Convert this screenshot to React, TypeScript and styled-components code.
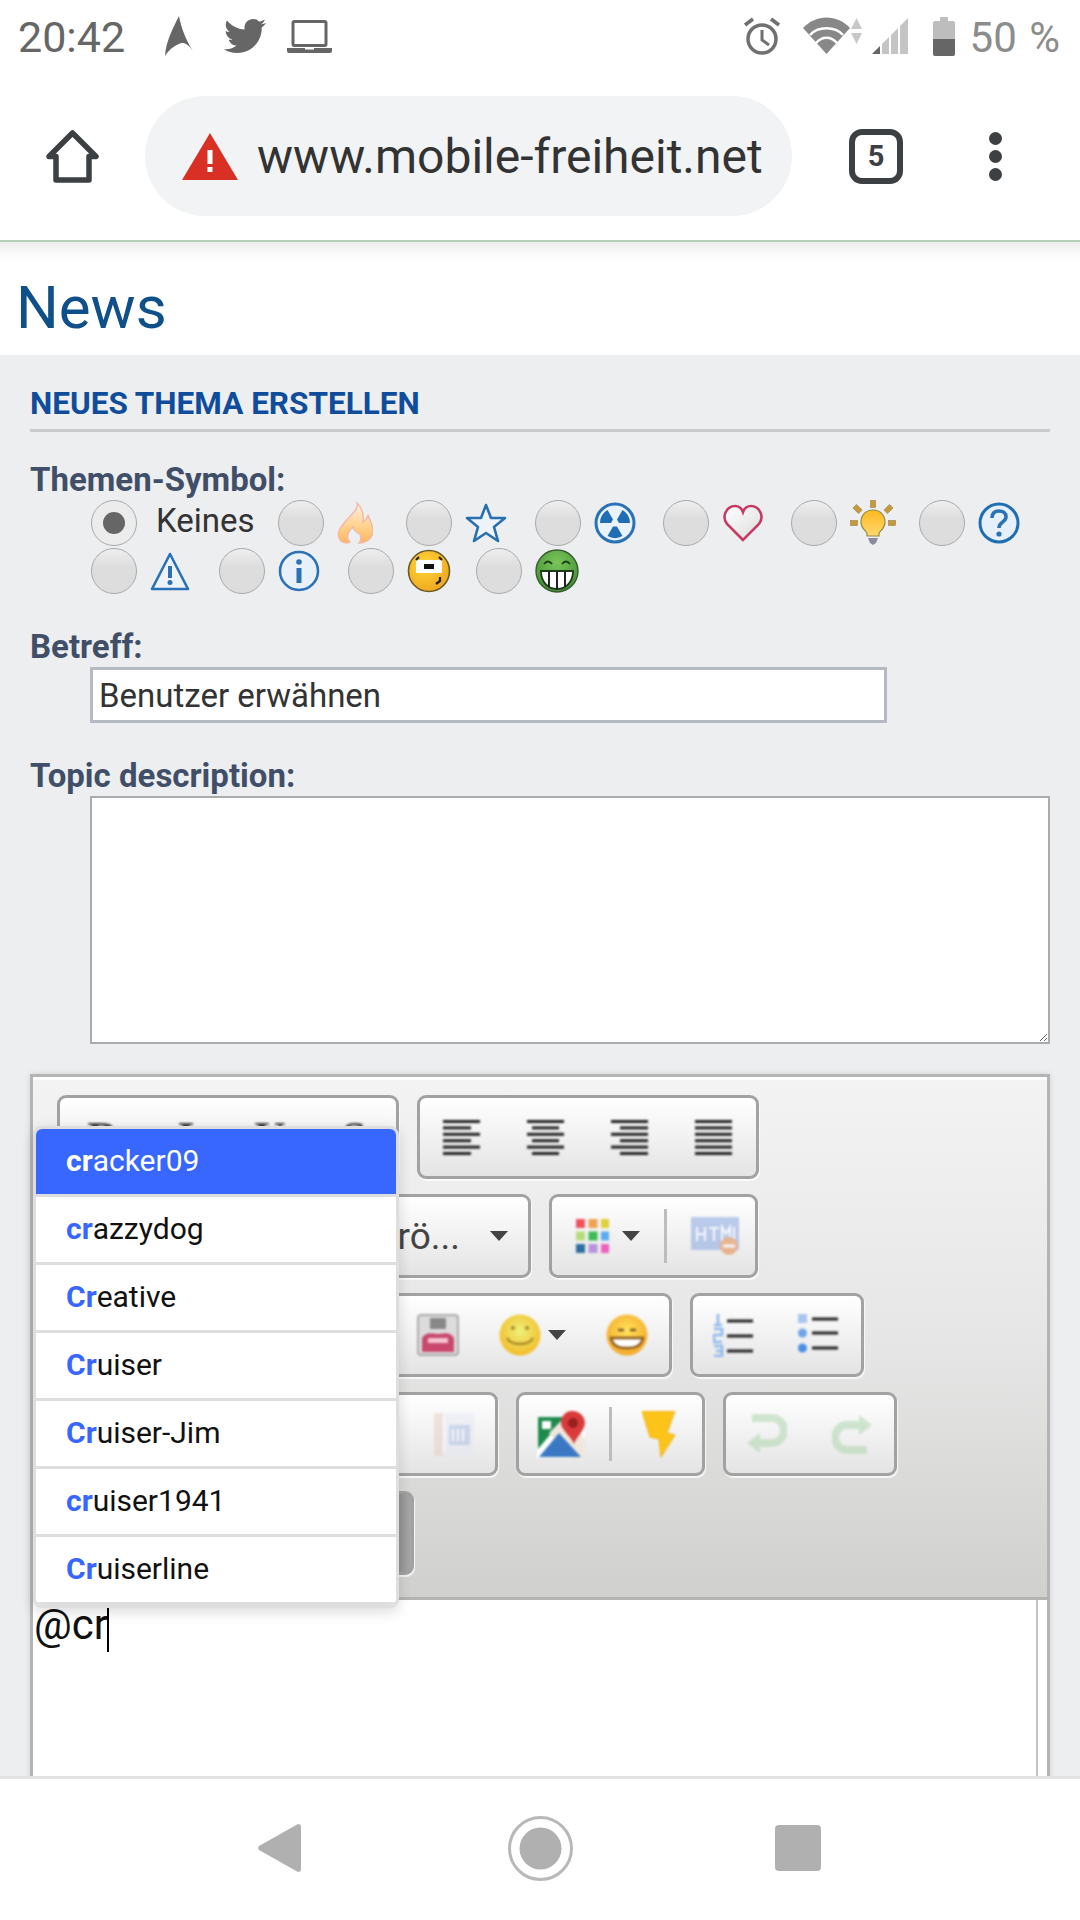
import React from "react";
import styled, { createGlobalStyle } from "styled-components";
import { FaTwitter } from "react-icons/fa";

const GlobalStyle = createGlobalStyle`
  html, body {
    margin: 0;
    padding: 0;
    background: #fff;
    font-family: Roboto, "Liberation Sans", sans-serif;
  }
`;

const Screen = styled.div`
  width: 1080px;
  height: 1920px;
  display: flex;
  flex-direction: column;
  overflow: hidden;
  background: #fff;
`;

/* status bar */
const StatusBar = styled.div`
  height: 72px;
  flex: none;
  display: flex;
  align-items: center;
  padding: 0 20px 0 18px;
  color: #666;
`;

const Clock = styled.div`
  font-size: 43px;
  line-height: 72px;
  padding-top: 2px;
`;

const Slot = styled.div<{ $ml: number }>`
  display: flex;
  align-items: center;
  margin-left: ${(p) => p.$ml}px;
`;

const Spacer = styled.div`
  flex: 1;
`;

const Percent = styled.div`
  font-size: 42px;
  color: #8c8c8c;
  margin-left: 15px;
  padding-top: 2px;
  word-spacing: 2px;
`;

/* browser bar */
const BrowserBar = styled.div`
  height: 168px;
  flex: none;
  display: flex;
  align-items: center;
  padding-left: 45px;
  border-bottom: 2px solid #b5cfba;
`;

const UrlPill = styled.div`
  width: 647px;
  height: 120px;
  margin-left: 45px;
  border-radius: 60px;
  background: #f1f3f4;
  display: flex;
  align-items: center;
  gap: 20px;
  padding-left: 37px;
  box-sizing: border-box;
`;

const UrlText = styled.div`
  font-size: 48px;
  color: #333;
  margin-left: -1px;
`;

const TabCount = styled.div`
  width: 54px;
  height: 55px;
  margin-left: 57px;
  box-sizing: border-box;
  border: 6px solid #3c4043;
  border-radius: 13px;
  display: flex;
  align-items: center;
  justify-content: center;
  font-size: 29px;
  font-weight: 700;
  color: #3c4043;
`;

const MenuDots = styled.div`
  margin-left: 86px;
  display: flex;
  flex-direction: column;
  gap: 5px;
`;

const MenuDot = styled.span`
  width: 13px;
  height: 13px;
  border-radius: 50%;
  background: #3c4043;
`;

/* page */
const Page = styled.div`
  flex: 1;
  min-height: 0;
  overflow: hidden;
  display: flex;
  flex-direction: column;
`;

const TitleBar = styled.div`
  height: 113px;
  flex: none;
  box-sizing: border-box;
  padding: 33px 0 0 16px;
  background: linear-gradient(#ececec, #fafafa 12px, #fff 20px);
`;

const PageTitle = styled.h1`
  margin: 0;
  font-size: 60px;
  line-height: 66px;
  font-weight: 400;
  color: #0f4f8a;
`;

const Form = styled.div`
  flex: 1;
  min-height: 0;
  background: #eceef0;
  padding: 31px 30px 0;
`;

const Heading = styled.h2`
  margin: 0;
  font-size: 31.5px;
  line-height: 36px;
  font-weight: 700;
  color: #0f4d9c;
  padding-bottom: 7px;
  border-bottom: 3px solid #cbcbcb;
`;

const FieldLabel = styled.div<{ $mt: number }>`
  margin: ${(p) => p.$mt}px 0 2px;
  font-size: 33px;
  line-height: 36px;
  font-weight: 700;
  color: #414e68;
`;

const SymbolGrid = styled.div`
  margin-left: 61px;
  display: flex;
  flex-wrap: wrap;
  row-gap: 2px;
`;

const SymbolOption = styled.label<{ $wide?: boolean }>`
  width: ${(p) => (p.$wide ? 187 : 128.3)}px;
  height: 46px;
  display: flex;
  align-items: center;
  gap: ${(p) => (p.$wide ? 19 : 13)}px;
  & > svg {
    filter: blur(0.4px);
  }
`;

const Radio = styled.span<{ $checked?: boolean }>`
  width: 46px;
  height: 46px;
  flex: none;
  box-sizing: border-box;
  border: 1px solid #a9a9a9;
  border-radius: 50%;
  background: ${(p) =>
    p.$checked ? "#ececec" : "linear-gradient(#efefef, #dddddd 40%)"};
  display: flex;
  align-items: center;
  justify-content: center;
  &::after {
    content: "";
    width: 22px;
    height: 22px;
    border-radius: 50%;
    background: ${(p) => (p.$checked ? "#666" : "transparent")};
  }
`;

const SymbolText = styled.span`
  font-size: 33px;
  color: #333;
  margin-top: -6px;
`;

const SubjectInput = styled.input`
  display: block;
  width: 797px;
  height: 56px;
  margin-left: 60px;
  box-sizing: border-box;
  border: 3px solid #b5bac2;
  border-radius: 0;
  padding: 0 6px;
  background: #fff;
  font-family: Roboto, sans-serif;
  font-size: 33px;
  color: #333;
  outline: none;
`;

const DescriptionInput = styled.textarea`
  display: block;
  width: 960px;
  height: 248px;
  margin-left: 60px;
  box-sizing: border-box;
  border: 2px solid #ababab;
  border-radius: 0;
  background: #fff;
  outline: none;
`;

/* editor */
const Editor = styled.div`
  position: relative;
  margin-top: 30px;
  height: 760px;
  box-sizing: border-box;
  border: 3px solid #b4b4b4;
  box-shadow: 0 0 6px rgba(0, 0, 0, 0.12);
  display: flex;
  flex-direction: column;
`;

const Toolbar = styled.div`
  flex: none;
  height: 523px;
  box-sizing: border-box;
  border-top: 3px solid #fff;
  border-bottom: 3px solid #b4b4b4;
  padding: 15px 0 0 24px;
  background: linear-gradient(#f3f3f3, #e6e6e6 50%, #d0d1ce);
  display: flex;
  flex-direction: column;
  gap: 15px;
`;

const ToolRow = styled.div`
  display: flex;
  gap: 18px;
`;

const ToolGroup = styled.div<{
  $w: number;
  $gap?: number;
  $pl?: number;
  $pr?: number;
  $end?: boolean;
  $dark?: boolean;
}>`
  width: ${(p) => p.$w}px;
  height: 84px;
  flex: none;
  box-sizing: border-box;
  border: 3px solid #a2a2a2;
  border-radius: 9px;
  padding: 0 ${(p) => p.$pr ?? 0}px 0 ${(p) => p.$pl ?? 0}px;
  background: ${(p) =>
    p.$dark
      ? "linear-gradient(90deg, #777 92%, #a8a8a8)"
      : "linear-gradient(#ffffff, #e4e4e4)"};
  box-shadow: 1px 2px 1px rgba(255, 255, 255, 0.75);
  display: flex;
  align-items: center;
  justify-content: ${(p) => (p.$end ? "flex-end" : "flex-start")};
  gap: ${(p) => p.$gap ?? 0}px;
`;

const FormatLetter = styled.span`
  width: 84px;
  text-align: center;
  font-family: "Liberation Serif", serif;
  font-size: 44px;
  font-weight: 700;
  color: #444;
  filter: blur(0.8px);
`;

const SelectValue = styled.span`
  font-size: 37px;
  color: #444;
`;

const DropArrow = styled.span`
  width: 0;
  height: 0;
  flex: none;
  border-left: 9px solid transparent;
  border-right: 9px solid transparent;
  border-top: 10px solid #444;
`;

const ToolCell = styled.div<{ $gap: number }>`
  display: flex;
  align-items: center;
  gap: ${(p) => p.$gap}px;
`;

const ToolDivider = styled.span`
  width: 3px;
  height: 54px;
  flex: none;
  background: #bdbdbd;
`;

const ToolIcon = styled.svg<{ $faded?: boolean; $ml?: number }>`
  display: block;
  flex: none;
  margin-left: ${(p) => p.$ml ?? 0}px;
  filter: blur(0.9px);
  opacity: ${(p) => (p.$faded ? 0.5 : 1)};
`;

const EditArea = styled.div`
  position: relative;
  flex: 1;
  background: #fff;
  font-size: 42px;
  line-height: 50px;
  color: #111;
  padding-left: 1px;
  &::after {
    content: "";
    position: absolute;
    top: 0;
    bottom: 0;
    right: 9px;
    width: 2px;
    background: #c4c4c4;
  }
`;

const Caret = styled.span`
  display: inline-block;
  width: 2px;
  height: 44px;
  margin-left: -1px;
  vertical-align: -13px;
  background: #000;
`;

/* mention popup */
const MentionList = styled.ul`
  position: absolute;
  top: 49px;
  left: 0;
  z-index: 2;
  width: 366px;
  margin: 0;
  padding: 0;
  list-style: none;
  box-sizing: border-box;
  border: 3px solid #dedede;
  border-radius: 9px;
  overflow: hidden;
  background: #fff;
  box-shadow: 0 4px 14px rgba(0, 0, 0, 0.14);
`;

const MentionItem = styled.li<{ $active?: boolean }>`
  height: 68px;
  box-sizing: border-box;
  padding-left: 30px;
  border-bottom: 3px solid #dedede;
  line-height: 63px;
  font-size: 30px;
  color: ${(p) => (p.$active ? "#fff" : "#111")};
  background: ${(p) => (p.$active ? "#3767ff" : "#fff")};
`;

const MentionMatch = styled.b<{ $active?: boolean }>`
  color: ${(p) => (p.$active ? "#fff" : "#3767ff")};
`;

/* android nav bar */
const NavBar = styled.div`
  height: 144px;
  flex: none;
  box-sizing: border-box;
  border-top: 3px solid #e2e2e2;
  background: #fff;
  display: flex;
  align-items: center;
  padding: 0 0 3px 258px;
`;

/* status icons */
const LocationArrow = () => (
  <svg width="28" height="40" viewBox="0 0 28 40">
    <path d="M14 0C16 12 22 26 28 35 23 28 20 27 17 27 12 28 4 33 0 40 1 25 8 12 14 0Z" fill="#666" />
  </svg>
);

const LaptopIcon = () => (
  <svg width="45" height="33" viewBox="0 0 45 33">
    <rect x="6" y="1.5" width="33" height="24" rx="1.5" fill="none" stroke="#666" strokeWidth="3" />
    <path d="M0 28h18v1.5h9V28h18v3a2 2 0 0 1-2 2H2a2 2 0 0 1-2-2z" fill="#666" />
  </svg>
);

const AlarmIcon = () => (
  <svg width="38" height="38" viewBox="0 0 38 38">
    <circle cx="19" cy="22" r="14" fill="none" stroke="#707070" strokeWidth="3.5" />
    <path d="M19 13v10l7 5" fill="none" stroke="#707070" strokeWidth="3" />
    <path d="M2 8l8-6M36 8l-8-6" stroke="#707070" strokeWidth="3.5" />
  </svg>
);

const WifiIcon = () => (
  <svg width="60" height="38" viewBox="0 0 60 38">
    <path d="M0 11C13-3 34-3 47 11L23.5 37Z" fill="#888" />
    <path d="M7 18C15 9 32 9 40 18M13 26C19 19 28 19 34 26" fill="none" stroke="#fff" strokeWidth="2.5" />
    <path d="M53.5 1L59 12H48ZM53.5 27L48 16H59Z" fill="#c8c8c8" />
  </svg>
);

const SignalIcon = () => (
  <svg width="36" height="36" viewBox="0 0 36 36">
    <path d="M0 36L8 28V36Z" fill="#666" />
    <path d="M10 26L17 19V36H10ZM19 17L26 10V36H19ZM28 8L36 0V36H28Z" fill="#c4c4c4" />
  </svg>
);

const BatteryIcon = () => (
  <svg width="22" height="39" viewBox="0 0 22 39">
    <path d="M7 0h8v4h5a2 2 0 0 1 2 2v16H0V6a2 2 0 0 1 2-2h5z" fill="#bdbdbd" />
    <path d="M0 22h22v15a2 2 0 0 1-2 2H2a2 2 0 0 1-2-2z" fill="#666" />
  </svg>
);

/* browser icons */
const HomeIcon = () => (
  <svg width="55" height="54" viewBox="0 0 55 54">
    <path d="M27.5 4L51 27.5H44V51H11V27.5H4Z" fill="#fff" stroke="#3c4043" strokeWidth="5.5" strokeLinejoin="round" />
  </svg>
);

const WarningIcon = () => (
  <svg width="56" height="47" viewBox="0 0 56 47">
    <path d="M28 0L56 47H0Z" fill="#d93025" />
    <rect x="25.5" y="17" width="5" height="14" fill="#fff" />
    <rect x="25.5" y="34" width="5" height="5" fill="#fff" />
  </svg>
);

/* topic symbols */
const FireSymbol = () => (
  <svg width="36" height="42" viewBox="0 0 36 42">
    <defs>
      <linearGradient id="fire" x1="0" y1="0" x2="0" y2="1">
        <stop offset="0" stopColor="#fdeee6" />
        <stop offset="0.55" stopColor="#ffd492" />
        <stop offset="1" stopColor="#ffb65a" />
      </linearGradient>
    </defs>
    <path
      d="M20 1C22 8 14 12 8 20 3 26 0 30 2 36 4 41 10 42 13 40 9 37 10 30 16 25 17 31 23 30 24 34 24 37 23 40 22 41 30 41 36 36 36 28 36 22 32 18 31 13 30 17 28 19 26 20 27 13 25 5 20 1Z"
      fill="url(#fire)"
      stroke="#f3b7a6"
      strokeWidth="1.4"
    />
  </svg>
);

const StarSymbol = () => (
  <svg width="42" height="42" viewBox="0 0 42 42">
    <path d="M21 3L26 16H40L29 25 33 39 21 31 9 39 13 25 2 16H16Z" fill="#eef3f9" stroke="#2a6fb0" strokeWidth="2.6" strokeLinejoin="round" />
  </svg>
);

const RadiationSymbol = () => (
  <svg width="42" height="42" viewBox="0 0 42 42">
    <circle cx="21" cy="21" r="19" fill="#eaf3fb" stroke="#2a72b5" strokeWidth="3" />
    <path
      d="M17 21L6 21A15 15 0 0 1 13.5 8L19 17.5ZM25 21L36 21A15 15 0 0 0 28.5 8L23 17.5ZM23 24.5L28.5 34A15 15 0 0 1 13.5 34L19 24.5Z"
      fill="#1f6db3"
    />
  </svg>
);

const HeartSymbol = () => (
  <svg width="42" height="40" viewBox="0 0 42 40">
    <defs>
      <linearGradient id="heart" x1="0" y1="0" x2="1" y2="1">
        <stop offset="0" stopColor="#fff" />
        <stop offset="1" stopColor="#dcdcdc" />
      </linearGradient>
    </defs>
    <path d="M21 37L5 21C-1 13 5 3 13 3 17 3 20 6 21 9 22 6 25 3 29 3 37 3 43 13 37 21Z" fill="url(#heart)" stroke="#c63a63" strokeWidth="2.6" />
  </svg>
);

const BulbSymbol = () => (
  <svg width="46" height="46" viewBox="0 0 46 46">
    <defs>
      <linearGradient id="bulb" x1="0" y1="0" x2="0" y2="1">
        <stop offset="0" stopColor="#ffb820" />
        <stop offset="1" stopColor="#ffd870" />
      </linearGradient>
    </defs>
    <g fill="#c8983c" stroke="#9a8440" strokeWidth="0.6">
      <rect x="20.5" y="0.5" width="5" height="7" />
      <rect x="0.5" y="20.5" width="7" height="5" />
      <rect x="38.5" y="20.5" width="7" height="5" />
      <rect x="5" y="5" width="5" height="8" transform="rotate(-45 7.5 9)" />
      <rect x="36" y="5" width="5" height="8" transform="rotate(45 38.5 9)" />
    </g>
    <path d="M23 10C30 10 35 15 35 22 35 28 31 30 29 33V36H17V33C15 30 11 28 11 22 11 15 16 10 23 10Z" fill="url(#bulb)" stroke="#8f8a3e" strokeWidth="1.2" />
    <path d="M18 38H28L26 43 23 45 20 43Z" fill="#8d8aa0" />
  </svg>
);

const QuestionSymbol = () => (
  <svg width="42" height="42" viewBox="0 0 42 42">
    <circle cx="21" cy="21" r="19" fill="#e6f0fa" stroke="#1f6db3" strokeWidth="3" />
    <path d="M14 16C14 11 17 9 21 9 25 9 28 11 28 15 28 20 21 20 21 26" fill="none" stroke="#2a72b5" strokeWidth="3.6" />
    <circle cx="21" cy="32" r="2.6" fill="#2a72b5" />
  </svg>
);

const AlertSymbol = () => (
  <svg width="40" height="40" viewBox="0 0 40 40">
    <path d="M20 3L38 38H2Z" fill="#edf3f9" stroke="#2a72b5" strokeWidth="2.6" strokeLinejoin="round" />
    <rect x="18" y="15" width="4" height="12" fill="#2a72b5" />
    <circle cx="20" cy="31.5" r="2.5" fill="#2a72b5" />
  </svg>
);

const InfoSymbol = () => (
  <svg width="42" height="42" viewBox="0 0 42 42">
    <circle cx="21" cy="21" r="19" fill="#e8f1fa" stroke="#2a72b5" strokeWidth="2.6" />
    <circle cx="21" cy="12" r="2.8" fill="#2a72b5" />
    <rect x="18.5" y="18" width="5" height="15" fill="#2a72b5" />
  </svg>
);

const RoflSymbol = () => (
  <svg width="44" height="44" viewBox="0 0 44 44">
    <defs>
      <radialGradient id="rofl" cx="0.4" cy="0.35" r="0.7">
        <stop offset="0" stopColor="#ffd83a" />
        <stop offset="1" stopColor="#f0a51e" />
      </radialGradient>
    </defs>
    <circle cx="22" cy="22" r="20.5" fill="url(#rofl)" stroke="#6a5a2a" strokeWidth="1.6" />
    <rect x="9" y="11" width="26" height="13" rx="1" fill="#fff" />
    <rect x="17" y="15" width="10" height="5" fill="#111" />
    <path d="M9 11l3-3M35 11l-3-3" stroke="#222" strokeWidth="2" />
    <path d="M33 28v4l-4 3" fill="none" stroke="#222" strokeWidth="2.2" />
  </svg>
);

const GrinSymbol = () => (
  <svg width="44" height="46" viewBox="0 0 44 46">
    <defs>
      <radialGradient id="grin" cx="0.5" cy="0.3" r="0.75">
        <stop offset="0" stopColor="#7bc65a" />
        <stop offset="1" stopColor="#3c8a30" />
      </radialGradient>
    </defs>
    <circle cx="22" cy="23" r="21" fill="url(#grin)" stroke="#3a5a30" strokeWidth="1.4" />
    <path d="M9 16q4-5 8 0M27 16q4-5 8 0" fill="none" stroke="#1e3a18" strokeWidth="1.8" />
    <path d="M6 23H38C38 34 31 41 22 41 13 41 6 34 6 23Z" fill="#fff" stroke="#1e3a18" strokeWidth="1.8" />
    <path d="M14 23V39M22 23V41M30 23V39" stroke="#222" strokeWidth="2" />
  </svg>
);

/* toolbar icons */
const AlignIcon = ({ lines }: { lines: [number, number][] }) => (
  <ToolIcon width="38" height="36" viewBox="0 0 38 36">
    {lines.map(([x1, x2], i) => (
      <rect key={i} x={x1} y={i * 6.4 + 1} width={x2 - x1} height="3" fill="#222" />
    ))}
  </ToolIcon>
);

const PaletteIcon = () => {
  const colors = ["#f0525e", "#f2a052", "#dfcf3c", "#b4dc7c", "#3cba54", "#5cabf0", "#2f6f9f", "#b694dc", "#ef5fbc"];
  return (
    <ToolIcon width="33" height="34" viewBox="0 0 33 34">
      {colors.map((c, i) => (
        <rect key={c} x={(i % 3) * 12.5} y={Math.floor(i / 3) * 12.5} width="9" height="9" fill={c} />
      ))}
    </ToolIcon>
  );
};

const HtmlIcon = () => (
  <ToolIcon width="48" height="38" viewBox="0 0 48 38" $faded>
    <rect x="0" y="0" width="48" height="33" fill="#7d9fe0" />
    <path d="M6 10v14M14 10v14M6 17h8M18 11h10M23 11v13M31 24V10l4 7 4-7v14M43 10v14" stroke="#fff" strokeWidth="2" fill="none" />
    <circle cx="38" cy="29" r="9" fill="#e07a30" />
    <rect x="32" y="27.5" width="12" height="3" fill="#fff" />
  </ToolIcon>
);

const VideoIcon = () => (
  <ToolIcon width="42" height="42" viewBox="0 0 42 42">
    <rect x="1" y="1" width="40" height="40" rx="3" fill="#dcdcdc" stroke="#999" strokeWidth="1.5" />
    <rect x="13" y="4" width="16" height="11" fill="#888" />
    <path d="M5 24C10 17 14 20 21 20S32 17 37 24V38H5Z" fill="#c8486e" />
    <rect x="11" y="24" width="20" height="5" fill="#f5c4d2" />
  </ToolIcon>
);

const SmileyIcon = ({ grin }: { grin?: boolean }) => (
  <ToolIcon width="42" height="44" viewBox="0 0 42 44">
    <defs>
      <radialGradient id={grin ? "toolgrin" : "toolsmile"} cx="0.5" cy="0.4" r="0.6">
        <stop offset="0" stopColor={grin ? "#ffe35a" : "#eef07a"} />
        <stop offset="1" stopColor={grin ? "#f4a92a" : "#f2bd28"} />
      </radialGradient>
    </defs>
    <circle cx="21" cy="22" r="20.5" fill={`url(#${grin ? "toolgrin" : "toolsmile"})`} />
    {grin ? (
      <>
        <path d="M12 17h6M24 17h6" stroke="#7a5a20" strokeWidth="2.4" />
        <path d="M5 25H37C35 34 28 35 21 35S7 34 5 25Z" fill="#fff" stroke="#8a5a1c" strokeWidth="2.4" />
      </>
    ) : (
      <>
        <circle cx="14" cy="15" r="2" fill="#a88a2a" />
        <circle cx="28" cy="15" r="2" fill="#a88a2a" />
        <path d="M8 25C12 33 30 33 34 25" fill="none" stroke="#a88a2a" strokeWidth="2.4" />
      </>
    )}
  </ToolIcon>
);

const NumberListIcon = () => (
  <ToolIcon width="40" height="44" viewBox="0 0 40 44">
    <path d="M5 1V12M1 12H9M1 16H9V22H1V29H9M1 33H9V43H1M3 38H9" fill="none" stroke="#8fb9ee" strokeWidth="2.6" />
    <path d="M14 8H40M14 23H40M14 38H40" stroke="#222" strokeWidth="3" />
  </ToolIcon>
);

const BulletListIcon = () => (
  <ToolIcon width="40" height="44" viewBox="0 0 40 44">
    <rect x="0" y="1" width="9" height="9" fill="#a8c4f0" />
    <circle cx="4.5" cy="20" r="4.5" fill="#70a4ea" />
    <circle cx="4.5" cy="35" r="4.5" fill="#4a8fe4" />
    <path d="M14 6H40M14 20H40M14 35H40" stroke="#222" strokeWidth="3" />
  </ToolIcon>
);

const DocIcon = () => (
  <ToolIcon width="40" height="43" viewBox="0 0 40 43" $faded>
    <rect x="0" y="0" width="40" height="43" fill="#e6e9f2" />
    <rect x="0" y="0" width="9" height="43" fill="#e4cfc4" />
    <rect x="9" y="3" width="2" height="37" fill="#fff" />
    <rect x="15" y="12" width="21" height="20" fill="#a6b8e6" />
    <path d="M19 16v12M24 16v12M29 16v12" stroke="#fff" strokeWidth="2" />
  </ToolIcon>
);

const MapIcon = () => (
  <ToolIcon width="48" height="47" viewBox="0 0 48 47">
    <rect x="0" y="5" width="48" height="42" fill="#fff" />
    <path d="M1 6H28L1 38Z" fill="#1d8a4c" />
    <rect x="5" y="10" width="9" height="8" fill="#fff" />
    <path d="M28 6L48 28V47L35 47 12 22Z" fill="#f0e8dc" />
    <path d="M22 22L44 46H2Z" fill="#3a78c4" />
    <path d="M35 0C43 0 48 6 48 12 48 19 40 25 37 33 34 25 24 19 24 12 24 6 28 0 35 0Z" fill="#d93a3a" />
    <circle cx="36" cy="12" r="5" fill="#9a1f1f" />
  </ToolIcon>
);

const BoltIcon = () => (
  <ToolIcon width="33" height="46" viewBox="0 0 33 46" $ml={6}>
    <path d="M0 0H33L25 22 33 24 19 46 17 28 8 26Z" fill="#fcc419" stroke="#eeae10" strokeWidth="1" />
  </ToolIcon>
);

const UndoIcon = ({ flip }: { flip?: boolean }) => (
  <ToolIcon width="41" height="42" viewBox="0 0 41 42" $faded style={flip ? { transform: "scale(-1, -1)" } : undefined}>
    <path d="M6 5H26C33 5 38 11 38 17 38 24 33 30 26 30H10" fill="none" stroke="#a8d4a8" strokeWidth="8" />
    <path d="M14 20V40L1 30Z" fill="#a8d4a8" />
  </ToolIcon>
);

const BackIcon = () => (
  <svg width="43" height="48" viewBox="0 0 43 48">
    <path d="M40 0a3 3 0 0 1 3 3V45a3 3 0 0 1-3 3L1 26a3 3 0 0 1 0-4Z" fill="#b0b0b0" />
  </svg>
);

const HomeRing = () => (
  <svg width="65" height="65" viewBox="0 0 65 65">
    <circle cx="32.5" cy="32.5" r="31" fill="none" stroke="#b8b8b8" strokeWidth="3" />
    <circle cx="32.5" cy="32.5" r="21" fill="#b0b0b0" />
  </svg>
);

const RecentIcon = () => (
  <svg width="46" height="46" viewBox="0 0 46 46">
    <rect width="46" height="46" rx="4" fill="#b0b0b0" />
  </svg>
);

const ALIGN_LEFT: [number, number][] = [[0, 37], [0, 28], [0, 37], [0, 28], [0, 37], [0, 28]];
const ALIGN_CENTER: [number, number][] = [[0, 37], [5, 32], [0, 37], [5, 32], [0, 37], [5, 32]];
const ALIGN_RIGHT: [number, number][] = [[0, 37], [9, 37], [0, 37], [9, 37], [0, 37], [9, 37]];
const ALIGN_FULL: [number, number][] = [[0, 37], [0, 37], [0, 37], [0, 37], [0, 37], [0, 37]];

const MENTIONS = [
  { match: "cr", rest: "acker09" },
  { match: "cr", rest: "azzydog" },
  { match: "Cr", rest: "eative" },
  { match: "Cr", rest: "uiser" },
  { match: "Cr", rest: "uiser-Jim" },
  { match: "cr", rest: "uiser1941" },
  { match: "Cr", rest: "uiserline" },
];

const SYMBOLS = [
  FireSymbol,
  StarSymbol,
  RadiationSymbol,
  HeartSymbol,
  BulbSymbol,
  QuestionSymbol,
  AlertSymbol,
  InfoSymbol,
  RoflSymbol,
  GrinSymbol,
];

const App: React.FC = () => {
  return (
    <Screen>
      <GlobalStyle />
      <StatusBar>
        <Clock>20:42</Clock>
        <Slot $ml={40}>
          <LocationArrow />
        </Slot>
        <Slot $ml={31}>
          <FaTwitter size={42} color="#666" />
        </Slot>
        <Slot $ml={21}>
          <LaptopIcon />
        </Slot>
        <Spacer />
        <AlarmIcon />
        <Slot $ml={22}>
          <WifiIcon />
        </Slot>
        <Slot $ml={9}>
          <SignalIcon />
        </Slot>
        <Slot $ml={25}>
          <BatteryIcon />
        </Slot>
        <Percent>50 %</Percent>
      </StatusBar>

      <BrowserBar>
        <HomeIcon />
        <UrlPill>
          <WarningIcon />
          <UrlText>www.mobile-freiheit.net</UrlText>
        </UrlPill>
        <TabCount>5</TabCount>
        <MenuDots>
          <MenuDot />
          <MenuDot />
          <MenuDot />
        </MenuDots>
      </BrowserBar>

      <Page>
        <TitleBar>
          <PageTitle>News</PageTitle>
        </TitleBar>
        <Form>
          <Heading>NEUES THEMA ERSTELLEN</Heading>

          <FieldLabel $mt={30}>Themen-Symbol:</FieldLabel>
          <SymbolGrid>
            <SymbolOption $wide>
              <Radio $checked />
              <SymbolText>Keines</SymbolText>
            </SymbolOption>
            {SYMBOLS.map((Symbol, i) => (
              <SymbolOption key={i}>
                <Radio />
                <Symbol />
              </SymbolOption>
            ))}
          </SymbolGrid>

          <FieldLabel $mt={35}>Betreff:</FieldLabel>
          <SubjectInput defaultValue="Benutzer erwähnen" />

          <FieldLabel $mt={35}>Topic description:</FieldLabel>
          <DescriptionInput />

          <Editor>
            <Toolbar>
              <ToolRow>
                <ToolGroup $w={342}>
                  <FormatLetter>B</FormatLetter>
                  <FormatLetter>I</FormatLetter>
                  <FormatLetter>U</FormatLetter>
                  <FormatLetter>S</FormatLetter>
                </ToolGroup>
                <ToolGroup $w={342} $pl={23} $gap={46}>
                  <AlignIcon lines={ALIGN_LEFT} />
                  <AlignIcon lines={ALIGN_CENTER} />
                  <AlignIcon lines={ALIGN_RIGHT} />
                  <AlignIcon lines={ALIGN_FULL} />
                </ToolGroup>
              </ToolRow>
              <ToolRow>
                <ToolGroup $w={474} $end $pr={20} $gap={30}>
                  <SelectValue>Grö...</SelectValue>
                  <DropArrow />
                </ToolGroup>
                <ToolGroup $w={209} $pl={24} $gap={24}>
                  <ToolCell $gap={13}>
                    <PaletteIcon />
                    <DropArrow />
                  </ToolCell>
                  <ToolDivider />
                  <HtmlIcon />
                </ToolGroup>
              </ToolRow>
              <ToolRow>
                <ToolGroup $w={615} $end $pr={21} $gap={40}>
                  <VideoIcon />
                  <ToolCell $gap={7}>
                    <SmileyIcon />
                    <DropArrow />
                  </ToolCell>
                  <SmileyIcon grin />
                </ToolGroup>
                <ToolGroup $w={174} $pl={20} $gap={45}>
                  <NumberListIcon />
                  <BulletListIcon />
                </ToolGroup>
              </ToolRow>
              <ToolRow>
                <ToolGroup $w={441} $end $pr={21}>
                  <DocIcon />
                </ToolGroup>
                <ToolGroup $w={189} $pl={18} $gap={24}>
                  <MapIcon />
                  <ToolDivider />
                  <BoltIcon />
                </ToolGroup>
                <ToolGroup $w={174} $pl={20} $gap={45}>
                  <UndoIcon />
                  <UndoIcon flip />
                </ToolGroup>
              </ToolRow>
              <ToolRow>
                <ToolGroup $w={357} $dark />
              </ToolRow>
            </Toolbar>
            <EditArea>
              @cr
              <Caret />
            </EditArea>
            <MentionList>
              {MENTIONS.map((m, i) => (
                <MentionItem key={m.match + m.rest} $active={i === 0}>
                  <MentionMatch $active={i === 0}>{m.match}</MentionMatch>
                  {m.rest}
                </MentionItem>
              ))}
            </MentionList>
          </Editor>
        </Form>
      </Page>

      <NavBar>
        <BackIcon />
        <Slot $ml={207}>
          <HomeRing />
        </Slot>
        <Slot $ml={202}>
          <RecentIcon />
        </Slot>
      </NavBar>
    </Screen>
  );
};

export default App;
